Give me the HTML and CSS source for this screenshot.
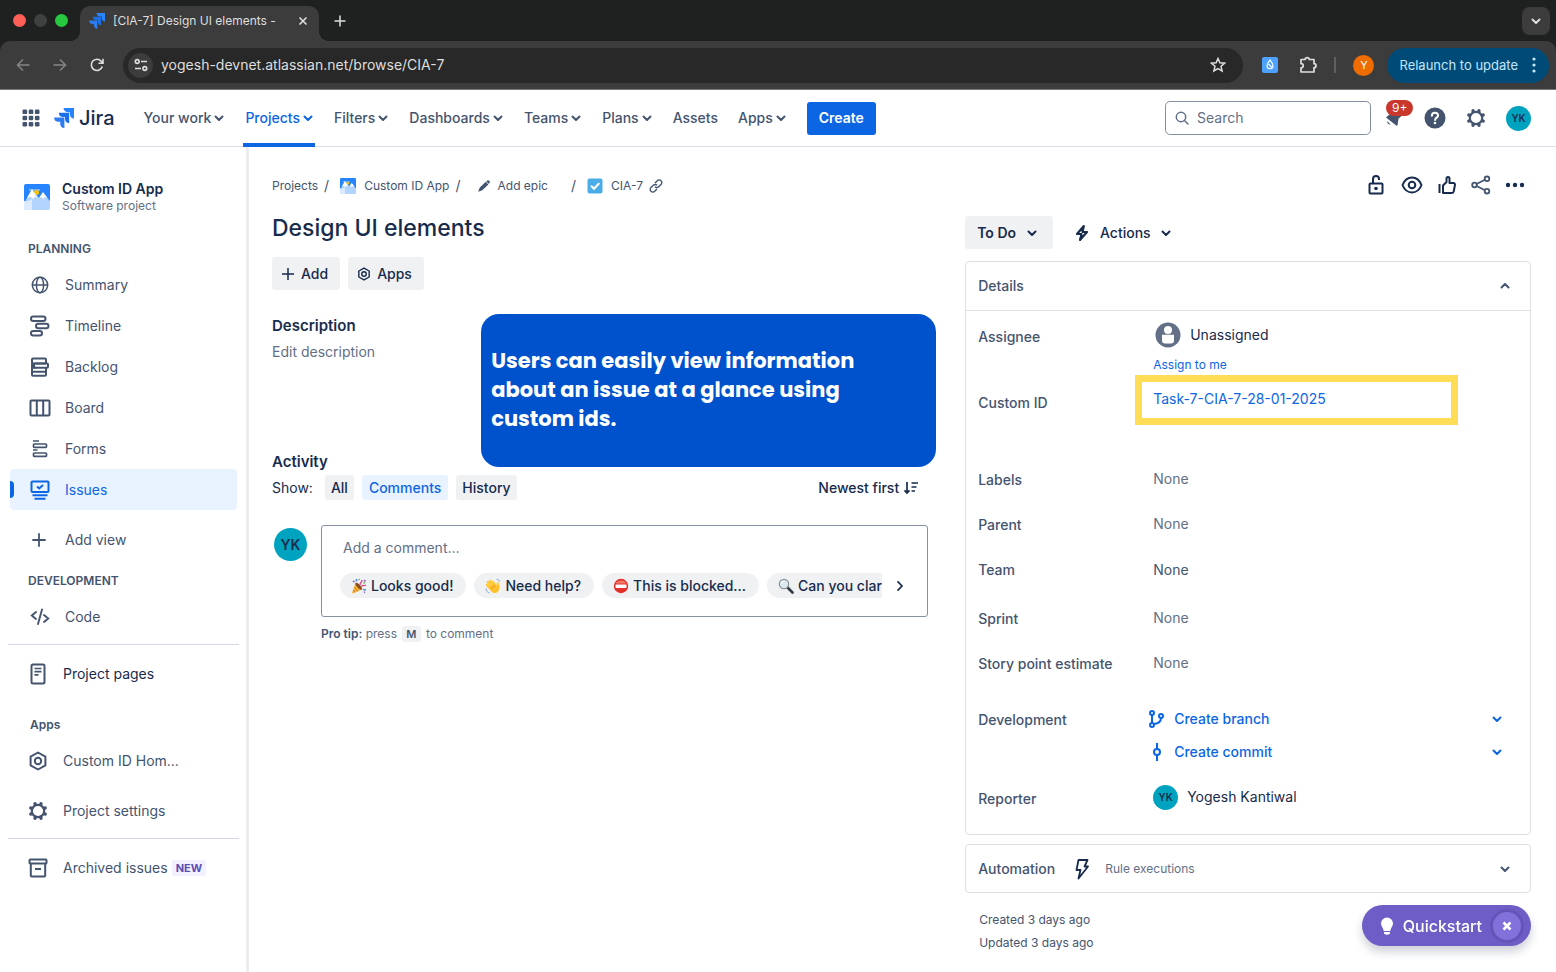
FILE: index.html
```html
<!DOCTYPE html>
<html lang="en">
<head>
<meta charset="utf-8">
<meta name="viewport" content="width=device-width, initial-scale=1">
<title>[CIA-7] Design UI elements - Jira</title>
<link rel="stylesheet" href="styles.css">
</head>
<body>
<svg class="sprite" aria-hidden="true">
  <symbol id="chevron" viewBox="0 0 12 12"><path d="M2.500 4.500 6 8l3.500-3.500" fill="none" stroke="currentColor" stroke-width="2" stroke-linecap="round" stroke-linejoin="round"/></symbol>
  <symbol id="jira" viewBox="0 0 20 20"><path fill="#2684ff" d="M9.500 0H20v10.500a4.600 4.600 0 0 1-4.100-4.600V4.300h-1.700A4.500 4.500 0 0 1 9.500 0z"/><path fill="#1d6fe8" d="M4.700 4.800h10.500v10.400a4.500 4.500 0 0 1-4.200-4.600V9H9.300a4.500 4.500 0 0 1-4.600-4.200z"/><path fill="#2e7df0" d="M0 9.500h10.400V20a4.600 4.600 0 0 1-4.200-4.600v-1.700H4.500A4.500 4.500 0 0 1 0 9.500z"/></symbol>
  <symbol id="gear" viewBox="0 0 20 20"><circle cx="10" cy="10" r="6.200" fill="none" stroke="currentColor" stroke-width="2.200"/><g stroke="currentColor" stroke-width="3.400" stroke-linecap="round"><path d="M7.100 3 7 2.800M12.900 3l.1-.2M17 7.100l.2-.1M17 12.900l.2.1M12.900 17l.1.2M7.100 17l-.1.2M3 12.900l-.2.1M3 7.100 2.800 7"/></g></symbol>
  <symbol id="hex" viewBox="0 0 20 20"><g fill="none" stroke="currentColor" stroke-width="2"><path stroke-linejoin="round" d="m10 1.500 7.400 4.200v8.600L10 18.500l-7.400-4.200V5.700z"/><circle cx="10" cy="10" r="3.200"/></g></symbol>
  <symbol id="picture" viewBox="0 0 26 26"><path fill="#2684ff" d="M2 0h22a2 2 0 0 1 2 2v15H0V2a2 2 0 0 1 2-2z"/><path fill="#79b0f5" d="M5 5h11v2H5z"/><circle cx="12.500" cy="8.500" r="2.500" fill="#ffc400"/><path fill="#b3d4ff" d="M0 19 8 6l7 8 4-5 7 8v7a2 2 0 0 1-2 2H2a2 2 0 0 1-2-2z"/><path fill="#deebff" d="m0 19 8-4v11H2a2 2 0 0 1-2-2z"/><path fill="#fff" d="m3 14 5-9 5.500 9-2.500-1.500L9 15l-2.500-2.500zM15 14l4-6 4.500 6-2.500-1-2 2-1.500-2z"/></symbol>
</svg>

<header class="browser">
  <div class="tabstrip">
    <div class="lights"><span class="light light-red"></span><span class="light"></span><span class="light light-green"></span></div>
    <div class="tab">
      <svg class="s16" aria-hidden="true"><use href="#jira"/></svg>
      <span class="tab-title">[CIA-7] Design UI elements -</span>
      <button class="bare" aria-label="Close tab"><svg class="s12" viewBox="0 0 12 12"><path d="m2.500 2.500 7 7m0-7-7 7" stroke="currentColor" stroke-width="1.600"/></svg></button>
    </div>
    <button class="bare new-tab" aria-label="New tab"><svg class="s12" viewBox="0 0 12 12"><path d="M6 .5v11M.5 6h11" stroke="currentColor" stroke-width="1.500"/></svg></button>
    <button class="bare tab-search" aria-label="Search tabs"><svg class="s12" aria-hidden="true"><use href="#chevron"/></svg></button>
  </div>
  <div class="toolbar">
    <button class="bare dim" aria-label="Back"><svg class="s14" viewBox="0 0 14 14"><path d="M13.500 7H1.500M7 1.500 1.500 7 7 12.500" fill="none" stroke="currentColor" stroke-width="1.500"/></svg></button>
    <button class="bare dim" aria-label="Forward"><svg class="s14" viewBox="0 0 14 14"><path d="M.5 7h12M7 1.500 12.500 7 7 12.500" fill="none" stroke="currentColor" stroke-width="1.500"/></svg></button>
    <button class="bare" aria-label="Reload"><svg class="s14" viewBox="0 0 14 14"><path d="M12.300 8.500A5.600 5.600 0 1 1 11.200 3.200l1.300 1.500M13 .8v4.500H8.500" fill="none" stroke="currentColor" stroke-width="1.600"/></svg></button>
    <div class="omnibox">
      <span class="site-info"><svg class="s14" viewBox="0 0 14 14"><g fill="none" stroke="currentColor" stroke-width="1.600"><circle cx="3.200" cy="3.500" r="1.900"/><path d="M7 3.500h6M1 10.500h6"/><circle cx="10.800" cy="10.500" r="1.900"/></g></svg></span>
      <input class="url" aria-label="Address" value="yogesh-devnet.atlassian.net/browse/CIA-7">
      <button class="bare" aria-label="Bookmark"><svg class="s16" viewBox="0 0 16 16"><path d="m8 1.500 1.900 4.300 4.700.4L11 9.300l1.100 4.600L8 11.500l-4.100 2.400L5 9.300 1.400 6.200l4.700-.4z" fill="none" stroke="currentColor" stroke-width="1.500"/></svg></button>
    </div>
    <span class="extension"><svg class="s12" viewBox="0 0 12 12"><path d="M6 1c2 2.500 3 3.700 3 5.800a3 3 0 0 1-6 0C3 4.700 4 3.500 6 1zM4.500 5l3.500 3.500" fill="none" stroke="#fff" stroke-width="1.100"/></svg></span>
    <button class="bare puzzle" aria-label="Extensions"><svg class="s18" viewBox="0 0 18 18"><path d="M2 3.500h4.200a2 1.900 0 0 1 4 0H15v4.200a2 2 0 0 1 0 4v4.300H2v-4.100c3-.3 3-4 0-4.200z" fill="none" stroke="currentColor" stroke-width="1.700" stroke-linejoin="round"/></svg></button>
    <span class="bar-sep"></span>
    <span class="profile">Y</span>
    <button class="relaunch">Relaunch to update <svg class="dots" viewBox="0 0 4 16"><g fill="currentColor"><circle cx="2" cy="2" r="1.600"/><circle cx="2" cy="8" r="1.600"/><circle cx="2" cy="14" r="1.600"/></g></svg></button>
  </div>
</header>

<nav class="topnav" aria-label="Primary">
  <button class="bare waffle" aria-label="Switch to"><svg class="s18" viewBox="0 0 18 18"><g fill="currentColor"><rect x=".5" y=".5" width="4.600" height="4.600" rx="1.200"/><rect x="6.700" y=".5" width="4.600" height="4.600" rx="1.200"/><rect x="12.900" y=".5" width="4.600" height="4.600" rx="1.200"/><rect x=".5" y="6.700" width="4.600" height="4.600" rx="1.200"/><rect x="6.700" y="6.700" width="4.600" height="4.600" rx="1.200"/><rect x="12.900" y="6.700" width="4.600" height="4.600" rx="1.200"/><rect x=".5" y="12.900" width="4.600" height="4.600" rx="1.200"/><rect x="6.700" y="12.900" width="4.600" height="4.600" rx="1.200"/><rect x="12.900" y="12.900" width="4.600" height="4.600" rx="1.200"/></g></svg></button>
  <a class="brand" href="#"><svg class="s20" aria-hidden="true"><use href="#jira"/></svg>Jira</a>
  <div class="menus">
    <a class="menu" href="#">Your work<svg class="s12"><use href="#chevron"/></svg></a>
    <a class="menu menu-current" href="#">Projects<svg class="s12"><use href="#chevron"/></svg></a>
    <a class="menu" href="#">Filters<svg class="s12"><use href="#chevron"/></svg></a>
    <a class="menu" href="#">Dashboards<svg class="s12"><use href="#chevron"/></svg></a>
    <a class="menu" href="#">Teams<svg class="s12"><use href="#chevron"/></svg></a>
    <a class="menu" href="#">Plans<svg class="s12"><use href="#chevron"/></svg></a>
    <a class="menu" href="#">Assets</a>
    <a class="menu" href="#">Apps<svg class="s12"><use href="#chevron"/></svg></a>
  </div>
  <button class="create">Create</button>
  <label class="search"><svg class="s14" viewBox="0 0 14 14"><g fill="none" stroke="currentColor" stroke-width="1.500" stroke-linecap="round"><circle cx="6" cy="6" r="4.700"/><path d="m9.500 9.500 3.500 3.500"/></g></svg><input aria-label="Search" placeholder="Search"></label>
  <div class="nav-icons">
    <button class="bare bell" aria-label="Notifications"><svg class="s20" viewBox="0 0 20 20"><path fill="currentColor" d="M2 9.500 7 5l11 2.500-3.500 3.200-1 6.300c-.2.800-.8.900-1.300.4z"/><path d="M3.200 13c-.2 2.300 1 3.600 3.400 3.500z" fill="currentColor"/></svg><span class="badge">9+</span></button>
    <button class="bare" aria-label="Help"><svg class="s22" viewBox="0 0 22 22"><circle cx="11" cy="11" r="10.500" fill="currentColor"/><path d="M7.900 8.700c0-4 6.200-4 6.200-.2 0 2-3 2.200-3 4.400" fill="none" stroke="#fff" stroke-width="2" stroke-linecap="round"/><circle cx="11" cy="16" r="1.300" fill="#fff"/></svg></button>
    <button class="bare" aria-label="Settings"><svg class="s20"><use href="#gear"/></svg></button>
    <span class="avatar avatar-sm">YK</span>
  </div>
</nav>

<div class="shell">
  <aside class="sidebar">
    <div class="project">
      <svg class="s26" aria-hidden="true"><use href="#picture"/></svg>
      <div><div class="project-name">Custom ID App</div><div class="project-type">Software project</div></div>
    </div>
    <h2 class="side-head">PLANNING</h2>
    <a class="side-link" href="#"><svg class="s20" viewBox="0 0 20 20"><g fill="none" stroke="currentColor" stroke-width="1.500"><circle cx="10" cy="10" r="7.700"/><ellipse cx="10" cy="10" rx="3.600" ry="7.700"/><path d="M2.300 10h15.400"/></g></svg>Summary</a>
    <a class="side-link" href="#"><svg class="s22" viewBox="0 0 22 22"><g fill="none" stroke="currentColor" stroke-width="2"><rect x="2" y="1.500" width="14.500" height="4.600" rx="2.300"/><rect x="7" y="8.700" width="12.500" height="4.600" rx="2.300"/><rect x="2" y="15.900" width="11" height="4.600" rx="2.300"/></g></svg>Timeline</a>
    <a class="side-link" href="#"><svg class="s22" viewBox="0 0 22 22"><g fill="none" stroke="currentColor" stroke-width="2" stroke-linejoin="round"><rect x="3" y="2.500" width="14" height="5" rx="1"/><rect x="5" y="7.500" width="14" height="4.300" rx="1"/><path d="M3 7.500v11.300a1 1 0 0 0 1 1h12a1 1 0 0 0 1-1v-7M3 15.800h14M3 11.800h4"/></g></svg>Backlog</a>
    <a class="side-link" href="#"><svg class="s22" viewBox="0 0 22 22"><path d="M2.500 3.500h17a1 1 0 0 1 1 1v13a1 1 0 0 1-1 1h-17a1 1 0 0 1-1-1v-13a1 1 0 0 1 1-1zM7.800 3.500v15M14.200 3.500v15" fill="none" stroke="currentColor" stroke-width="2"/></svg>Board</a>
    <a class="side-link" href="#"><svg class="s20" viewBox="0 0 20 20"><g fill="none" stroke="currentColor" stroke-width="1.700"><path d="M3 2h6M3 11h4.500"/><rect x="3.500" y="5" width="13" height="3.300" rx=".8"/><rect x="3.500" y="14" width="13" height="3.300" rx=".8"/></g></svg>Forms</a>
    <a class="side-link side-current" href="#" aria-current="page"><svg class="s22" viewBox="0 0 22 22"><g fill="none" stroke="currentColor" stroke-width="2"><rect x="2.500" y="2.500" width="17" height="10.500" rx="1"/><path d="m8 7.500 2.200 2L14 6M3.500 16.300h15M5.500 19.800h11"/></g></svg>Issues</a>
    <a class="side-link side-apart" href="#"><svg class="s22" viewBox="0 0 22 22"><path d="M10 5v12M4 11h12" stroke="currentColor" stroke-width="1.800" stroke-linecap="round"/></svg>Add view</a>
    <h2 class="side-head side-head-dev">DEVELOPMENT</h2>
    <a class="side-link" href="#"><svg class="s20" viewBox="0 0 20 20"><path d="M6 5 1.800 8.500 6 12M14 8l4.200 3.500L14 15M12 2.500 8 17" fill="none" stroke="currentColor" stroke-width="1.900" stroke-linecap="round"/></svg>Code</a>
    <hr>
    <a class="side-link side-strong" href="#"><svg class="s22" viewBox="0 0 22 22"><g fill="none" stroke="#44546f" stroke-width="2"><rect x="4.500" y="1.500" width="13" height="19" rx="1.500"/><path stroke-width="1.700" d="M7.500 5.500h7M7.500 8.700h7M7.500 11.800h4"/></g></svg>Project pages</a>
    <h2 class="side-head side-head-apps">Apps</h2>
    <a class="side-link" href="#"><svg class="s20"><use href="#hex"/></svg>Custom ID Hom...</a>
    <a class="side-link side-apart" href="#"><svg class="s20"><use href="#gear"/></svg>Project settings</a>
    <hr>
    <a class="side-link" href="#"><svg class="s20" viewBox="0 0 20 20"><g fill="none" stroke="currentColor" stroke-width="2"><rect x="1.500" y="1.500" width="17" height="4" rx=".8"/><path d="M2.800 5.500v12a1 1 0 0 0 1 1h12.400a1 1 0 0 0 1-1v-12M7 11h6"/></g></svg>Archived issues<span class="lozenge">NEW</span></a>
  </aside>

  <main class="issue">
    <div class="issue-top">
      <nav class="crumbs" aria-label="Breadcrumb">
        <a href="#">Projects</a><span class="slash">/</span>
        <a href="#" class="crumb-project"><svg class="s16"><use href="#picture"/></svg>Custom ID App</a><span class="slash">/</span>
        <a href="#" class="crumb-epic"><svg class="s12" viewBox="0 0 12 12"><path fill="currentColor" d="M8.300 1.400 9.200.6a1.300 1.300 0 0 1 1.800 0l.5.600a1.300 1.300 0 0 1 0 1.800l-.8.8zM7.800 1.800l2.600 2.600-6.100 5.900-3.300 1.300c-.5.2-.8-.1-.6-.6L1.800 7.500z"/></svg>Add epic</a><span class="slash">/</span>
        <a href="#" class="crumb-key"><svg class="s16" viewBox="0 0 16 16"><rect x=".5" y=".5" width="15" height="15" rx="2" fill="#4bade8"/><path d="m4.500 8.200 2.500 2.500 4.700-5" fill="none" stroke="#fff" stroke-width="2" stroke-linecap="round"/></svg>CIA-7</a>
        <svg class="s14" viewBox="0 0 14 14"><path d="m6 4 2.300-2.300a2.500 2.500 0 0 1 3.700 0 2.500 2.500 0 0 1 0 3.700L9.700 7.700a2.500 2.500 0 0 1-3.700 0M8 10l-2.300 2.300a2.500 2.500 0 0 1-3.700 0 2.500 2.500 0 0 1 0-3.700l2.300-2.300a2.500 2.500 0 0 1 3.700 0" fill="none" stroke="currentColor" stroke-width="1.400"/></svg>
      </nav>
      <div class="tools">
        <button class="bare" aria-label="Restrictions"><svg class="s22" viewBox="0 0 22 22"><g fill="none" stroke="currentColor" stroke-width="2"><rect x="4.500" y="9.500" width="13" height="10" rx="1"/><path d="M8 9.500V5a3 3 0 0 1 6 0v1"/></g><circle cx="11" cy="14.500" r="1.800" fill="currentColor"/></svg></button>
        <button class="bare" aria-label="Watch"><svg class="s22" viewBox="0 0 22 22"><g fill="none" stroke="currentColor" stroke-width="2"><path d="M1.500 11c4-10 15-10 19 0-4 10-15 10-19 0z"/><circle cx="11" cy="11" r="3.300"/></g></svg></button>
        <button class="bare" aria-label="Like"><svg class="s20" viewBox="0 0 20 20"><path d="M2.500 9v9M6 18V10.500L9.500 7V3.500c0-2 3-2 3 0V8h4a1.500 1.500 0 0 1 1.500 1.800l-1.300 6.700A2 2 0 0 1 14.700 18z" fill="none" stroke="currentColor" stroke-width="2" stroke-linejoin="round"/></svg></button>
        <button class="bare share" aria-label="Share"><svg class="s20" viewBox="0 0 20 20"><g fill="none" stroke="currentColor" stroke-width="1.800"><circle cx="3.500" cy="10" r="2.300"/><circle cx="16" cy="3.800" r="2.300"/><circle cx="16" cy="16.200" r="2.300"/><path d="m5.600 9 8.300-4.200M5.600 11l8.300 4.200"/></g></svg></button>
        <button class="bare" aria-label="More"><svg class="s20" viewBox="0 0 20 20"><g fill="currentColor"><circle cx="3" cy="10" r="2.200"/><circle cx="10" cy="10" r="2.200"/><circle cx="17" cy="10" r="2.200"/></g></svg></button>
      </div>
    </div>

    <div class="columns">
      <section class="content">
        <h1>Design UI elements</h1>
        <div class="buttons">
          <button class="btn"><svg class="s14" viewBox="0 0 14 14"><path d="M7 1v12M1 7h12" stroke="currentColor" stroke-width="1.500"/></svg>Add</button>
          <button class="btn"><svg class="s14"><use href="#hex"/></svg>Apps</button>
        </div>
        <h2 class="section-title">Description</h2>
        <p class="edit">Edit description</p>
        <h2 class="section-title section-activity">Activity</h2>
        <div class="filter">
          <span>Show:</span>
          <button class="pill">All</button><button class="pill pill-on">Comments</button><button class="pill">History</button>
          <button class="bare sort">Newest first<svg class="s16" viewBox="0 0 16 16"><path d="M4 2v11M1.500 10.300 4 13l2.500-2.700M8.500 3H15M8.500 7h5M8.500 11H12" fill="none" stroke="currentColor" stroke-width="1.700"/></svg></button>
        </div>
        <div class="comment">
          <span class="avatar avatar-lg">YK</span>
          <div class="comment-col">
            <div class="comment-box">
              <input class="comment-input" aria-label="Add a comment" placeholder="Add a comment…">
              <div class="chip-row">
                <div class="chips">
                  <button class="chip"><svg class="s16" viewBox="0 0 16 16"><path fill="#f5b73d" d="M4.500 5 1 14.700c-.2.600.2.900.7.700L11 11.500z"/><path d="m3.300 9 3.700 4.500M2.300 12l1.700 2.300" stroke="#d9832b" stroke-width="1.100"/><ellipse cx="7.700" cy="8.300" rx="1.600" ry="4.500" transform="rotate(-43 7.700 8.300)" fill="#8c4a1c"/><path d="M9 7c0-3 2-2 2-5M10 8.500c2-2 3 0 5-1.500" fill="none" stroke="#d8508d" stroke-width="1.400"/><path d="M5.500 1v2.500M12 11.500l3 .5" stroke="#4a8fe0" stroke-width="1.600"/><path d="m13 2 1.500 1.500M2 3l1.500 1M13 14.500l1-.5" stroke="#8d63c7" stroke-width="1.600"/><path d="m8 1 .5 1M12.500 5l1.500-.5" stroke="#6aa84f" stroke-width="1.400"/></svg>Looks good!</button>
                  <button class="chip"><svg class="s16" viewBox="0 0 16 16"><path fill="none" stroke="#ffcb3d" stroke-width="2.300" stroke-linecap="round" d="m4.500 10-2.700-3.200M6 8.500 2.800 4M8 7.200 5 3M10 7 7.700 3.700M12 9.500l.8-4"/><path fill="#ffc02e" d="M3.500 9.500 9.700 5.500l2.500 3.500 1.200-2.500 1 .5c.4 3-.2 6-2.600 7.500-3.300 1.800-6-.8-8.300-5z"/><path d="M5.300 9.300 7 11M7 8l1.700 2M8.800 7l1.700 2" stroke="#d98e1f" stroke-width=".7"/><path d="M1 10.500c.3 2.500 1.500 4 3.500 4.500M11.500 1.200c1.700.2 2.700 1 3.300 2.500" fill="none" stroke="#7ba7d8" stroke-width="1"/></svg>Need help?</button>
                  <button class="chip"><svg class="s16" viewBox="0 0 16 16"><circle cx="8" cy="8" r="7.200" fill="#e2302a"/><path d="M2.500 5.500a6.200 5.500 0 0 1 11 0z" fill="#f47a68"/><rect x="2.500" y="6.500" width="11" height="3.500" rx=".7" fill="#fff"/></svg>This is blocked...</button>
                  <button class="chip chip-last"><svg class="s16" viewBox="0 0 16 16"><path d="m9.500 9.500 5 5" stroke="#303a46" stroke-width="2.600" stroke-linecap="round"/><circle cx="6" cy="6" r="4.700" fill="#dce8ee" stroke="#8d9499" stroke-width="1.200"/><path d="M3.500 5.500a3 3 0 0 1 2.500-2" fill="none" stroke="#fff" stroke-width="1.200"/></svg>Can you clar</button>
                </div>
                <button class="bare chip-next" aria-label="More suggestions"><svg class="s12" viewBox="0 0 12 12"><path d="m4 1.800 4 4.200-4 4.200" fill="none" stroke="currentColor" stroke-width="1.700" stroke-linecap="round"/></svg></button>
              </div>
            </div>
            <p class="tip"><b>Pro tip:</b> press <kbd>M</kbd> to comment</p>
          </div>
        </div>
        <div class="callout">Users can easily view information about an issue at a glance using custom ids.</div>
      </section>

      <section class="side">
        <div class="status">
          <button class="btn btn-status">To Do<svg class="s12"><use href="#chevron"/></svg></button>
          <button class="btn btn-plain"><svg class="s18" viewBox="0 0 18 18"><path d="M10.800 2 4 10h4.500L7 16l7-8H9.500z" fill="none" stroke="currentColor" stroke-width="2.200" stroke-linejoin="round"/></svg>Actions<svg class="s12"><use href="#chevron"/></svg></button>
        </div>
        <div class="panel">
          <button class="panel-head">Details<svg class="s12 flip"><use href="#chevron"/></svg></button>
          <dl class="fields">
            <div class="field field-assignee"><dt>Assignee</dt><dd><span class="person"><svg class="s26" viewBox="0 0 26 26"><circle cx="13" cy="13" r="12.500" fill="#626f86"/><circle cx="13" cy="8" r="4" fill="#fff"/><path d="M7 12.800h12v5.700a3 3 0 0 1-3 3h-6a3 3 0 0 1-3-3z" fill="#fff"/></svg>Unassigned</span><a class="assign" href="#">Assign to me</a></dd></div>
            <div class="field field-custom"><dt>Custom ID</dt><dd class="highlight"><a href="#">Task-7-CIA-7-28-01-2025</a></dd></div>
            <div class="field"><dt>Labels</dt><dd class="none">None</dd></div>
            <div class="field"><dt>Parent</dt><dd class="none">None</dd></div>
            <div class="field field-team"><dt>Team</dt><dd class="none none-dark">None</dd></div>
            <div class="field"><dt>Sprint</dt><dd class="none">None</dd></div>
            <div class="field field-points"><dt>Story point estimate</dt><dd class="none">None</dd></div>
            <div class="field field-dev"><dt>Development</dt><dd class="dev">
              <button class="dev-link"><svg class="s18" viewBox="0 0 18 18"><g fill="none" stroke="currentColor" stroke-width="2"><circle cx="4" cy="3" r="2"/><circle cx="4" cy="15" r="2"/><circle cx="13" cy="6" r="2"/><path d="M4 5v8M13 8c0 4-3 5.500-7 6"/></g></svg>Create branch<svg class="s12 dev-more"><use href="#chevron"/></svg></button>
              <button class="dev-link"><svg class="s18" viewBox="0 0 18 18"><g fill="none" stroke="currentColor" stroke-width="2"><circle cx="9" cy="9" r="3"/><path d="M9 0v6M9 12v6"/></g></svg>Create commit<svg class="s12 dev-more"><use href="#chevron"/></svg></button>
            </dd></div>
            <div class="field"><dt>Reporter</dt><dd><span class="person"><span class="avatar avatar-sm">YK</span>Yogesh Kantiwal</span></dd></div>
          </dl>
        </div>
        <button class="panel panel-head automation">Automation<svg class="s22" viewBox="0 0 22 22"><path d="M7.500 2h9L13.500 8.500H17L7.500 20.500l2-8.500H5.500z" fill="none" stroke="#172b4d" stroke-width="1.800" stroke-linejoin="round"/></svg><small>Rule executions</small><svg class="s12 push"><use href="#chevron"/></svg></button>
        <p class="stamp">Created 3 days ago</p>
        <p class="stamp">Updated 3 days ago</p>
      </section>
    </div>
  </main>
</div>

<div class="quickstart">
  <button class="bare quick-open"><svg class="s18" viewBox="0 0 18 18"><path fill="currentColor" d="M9 .5a6 6 0 0 1 6 6c0 3-2.500 4.300-2.700 7.500H5.700C5.500 10.800 3 9.500 3 6.500a6 6 0 0 1 6-6zM6 15h6v1c0 1-1 1.700-3 1.700S6 17 6 16z"/></svg>Quickstart</button>
  <button class="bare quick-close" aria-label="Close Quickstart"><svg class="s12" viewBox="0 0 12 12"><path d="m2.500 2.500 7 7m0-7-7 7" stroke="currentColor" stroke-width="2.600"/></svg></button>
</div>
</body>
</html>
```
FILE: styles.css
```css
* { box-sizing: border-box; }
body {
  margin: 0;
  min-height: 100vh;
  display: flex;
  flex-direction: column;
  background: #fff;
  color: #172b4d;
  font: 14px/20px Inter, "Liberation Sans", sans-serif;
}
h1, h2, p, dl, dd { margin: 0; }
a { color: inherit; text-decoration: none; }
button, input { font: inherit; color: inherit; }
button { cursor: pointer; }
svg { flex: none; display: block; }
.sprite { position: absolute; width: 0; height: 0; }
.s12 { width: 12px; height: 12px; }
.s14 { width: 14px; height: 14px; }
.s16 { width: 16px; height: 16px; }
.s18 { width: 18px; height: 18px; }
.s20 { width: 20px; height: 20px; }
.s22 { width: 22px; height: 22px; }
.s26 { width: 26px; height: 26px; }
.bare { display: flex; align-items: center; padding: 0; border: 0; background: none; }

/* browser chrome */
.browser { background: #1f2120; color: #dedede; }
.tabstrip { display: flex; align-items: flex-end; height: 41px; padding: 0 6px 0 13px; }
.lights { display: flex; gap: 8px; align-self: center; }
.light { width: 13px; height: 13px; border-radius: 50%; background: #3f4140; }
.light-red { background: #ff5f57; }
.light-green { background: #28c840; }
.tab {
  position: relative; display: flex; align-items: center; gap: 8px;
  width: 239px; height: 35px; margin-left: 12px; padding: 0 10px 6px 9px;
  border-radius: 10px 10px 0 0; background: #3c3c3c;
}
.tab::before, .tab::after {
  content: ""; position: absolute; bottom: 0; width: 10px; height: 10px;
}
.tab::before { right: 100%; background: radial-gradient(circle at 0 0, #1f2120 10px, #3c3c3c 10px); }
.tab::after { left: 100%; background: radial-gradient(circle at 100% 0, #1f2120 10px, #3c3c3c 10px); }
.tab-title { flex: 1; white-space: nowrap; font-size: 12px; }
.new-tab { align-self: center; margin-left: 15px; }
.tab-search {
  align-self: center; justify-content: center; width: 28px; height: 28px;
  margin-left: auto; border-radius: 8px; background: #3c3c3c;
}
.toolbar {
  display: flex; align-items: center; gap: 23px; height: 49px; padding: 0 7px 0 16px;
  border-bottom: 1px solid #777; border-radius: 10px 10px 0 0; background: #3c3c3c;
}
.dim { color: #858585; }
.omnibox {
  flex: 1; display: flex; align-items: center; gap: 8px; height: 35px;
  margin-left: -4px; padding: 0 17px 0 5px; border-radius: 18px; background: #282828;
}
.site-info {
  display: grid; place-items: center; width: 25px; height: 25px;
  border-radius: 50%; background: #3c3c3c;
}
.url { flex: 1; min-width: 0; padding: 0; border: 0; background: none; outline: 0; }
.extension { display: grid; place-items: center; width: 16px; height: 16px; margin-left: -4px; background: #4da2ff; border-radius: 2px; }
.puzzle { margin-left: -2px; }
.bar-sep { width: 2px; height: 16px; margin: 0 -6px; background: #5f5f5f; }
.profile {
  display: grid; place-items: center; width: 21px; height: 21px;
  border-radius: 50%; background: #ef6c00; color: #fff; font-size: 11px;
}
.relaunch {
  display: flex; align-items: center; gap: 14px; height: 35px; margin-left: -10px; padding: 0 13px 0 12px;
  border: 0; border-radius: 18px; background: #004a77; color: #c2e7ff; font-size: 13px;
}
.dots { width: 4px; height: 16px; }

/* top navigation */
.topnav {
  display: flex; align-items: center; height: 57px; padding: 0 25px 0 22px;
  border-bottom: 1px solid #dcdfe8; color: #44546f;
}
.brand { display: flex; align-items: center; gap: 5px; margin: 0 29px 0 14px; color: #172b4d; font-size: 20px; font-weight: 500; }
.menus { display: flex; align-self: stretch; gap: 20px; }
.menu { position: relative; display: flex; align-items: center; gap: 2px; font-weight: 500; white-space: nowrap; }
.menu-current { color: #0c66e4; }
.menu-current::after { content: ""; position: absolute; inset: auto -1px -1px -2px; height: 4px; background: #0c66e4; }
.create {
  height: 33px; margin-left: 20px; padding: 0 12px; border: 0; border-radius: 3px;
  background: #0c66e4; color: #fff; font-weight: 600;
}
.search {
  display: flex; align-items: center; gap: 8px; width: 206px; height: 34px; margin-left: auto; padding: 0 9px;
  border: 1px solid #8590a2; border-radius: 5px; color: #626f86;
}
.search input { flex: 1; min-width: 0; padding: 0; border: 0; background: none; outline: 0; }
.search input::placeholder { color: #626f86; opacity: 1; }
.nav-icons { display: flex; align-items: center; gap: 20px; margin-left: 13px; }
.bell { position: relative; }
.badge {
  position: absolute; left: 2px; top: -8px; padding: 0 6px; border-radius: 8px;
  background: #c9372c; color: #fff; font-size: 12px; line-height: 16px;
}
.avatar {
  flex: none; display: grid; place-items: center; border-radius: 50%;
  background: #00a3bf; color: #172b4d; font-weight: 600;
}
.avatar-sm { width: 25px; height: 25px; font-size: 10px; }
.avatar-lg { width: 33px; height: 33px; font-size: 14px; }

/* sidebar */
.shell { flex: 1; display: flex; }
.sidebar { flex: none; width: 249px; padding: 33px 10px 20px; border-right: 3px solid #ebecf0; color: #44546f; }
.project { display: flex; align-items: center; gap: 12px; margin-bottom: 20px; padding-left: 14px; line-height: 17px; }
.project-name { color: #172b4d; font-weight: 600; }
.project-type { color: #626f86; font-size: 12px; }
.side-head { padding-left: 18px; font-size: 12px; font-weight: 600; line-height: 30px; }
.side-head-dev { margin-top: 6px; }
.side-head-apps { margin-top: 16px; padding-left: 20px; }
.side-link {
  position: relative; display: flex; align-items: center; gap: 14px;
  height: 41px; padding-left: 19px; border-radius: 4px; white-space: nowrap;
}
.side-link .s20 { margin: 0 1px; }
.side-current { width: 227px; background: #e9f2ff; color: #0c66e4; }
.side-current::before { content: ""; position: absolute; left: 0; top: 12px; width: 4px; height: 17px; border-radius: 0 4px 4px 0; background: #0c66e4; }
.side-apart { margin-top: 9px; }
.side-strong { color: #172b4d; }
.sidebar hr ~ .side-link { padding-left: 17px; }
.sidebar hr { height: 1px; margin: 7px -3px 8px -2px; border: 0; background: #d5d8e2; }
.lozenge { margin-left: -10px; padding: 0 4px; border-radius: 3px; background: #f3f0ff; color: #5e4db2; font-size: 11px; font-weight: 700; line-height: 16px; }

/* issue */
.issue { flex: 1; min-width: 0; padding: 26px 25px 20px 23px; }
.issue-top { display: flex; align-items: center; justify-content: space-between; height: 24px; }
.crumbs { display: flex; align-items: center; gap: 6px; padding-top: 2px; color: #44546f; font-size: 12px; }
.crumbs a { display: flex; align-items: center; gap: 8px; }
.slash { font-size: 14px; }
.crumb-project { margin-left: 5px; }
.crumb-epic { margin: 0 17px 0 11px; }
.crumb-key { margin-left: 5px; }
.tools { display: flex; align-items: center; gap: 14px; padding-right: 6px; }
.share { color: #44546f; }
.columns { display: grid; grid-template-columns: minmax(0, 54fr) minmax(0, 46fr); gap: 29px; }
.content { position: relative; padding: 17px 8px 0 0; }
h1 { font-size: 23px; font-weight: 500; line-height: 28px; }
.buttons { display: flex; gap: 8px; margin: 15px 0 26px; }
.btn {
  display: flex; align-items: center; gap: 6px; height: 33px; padding: 0 12px 0 9px;
  border: 0; border-radius: 3px; background: #f0f1f2; font-weight: 500;
}
.section-title { font-size: 15px; font-weight: 600; line-height: 20px; }
.edit { margin-top: 6px; color: #626f86; line-height: 20px; }
.section-activity { margin-top: 90px; }
.filter { display: flex; align-items: center; gap: 8px; margin-top: 3px; }
.filter > span { margin-right: 4px; }
.pill { height: 25px; padding: 0 6px; border: 0; border-radius: 3px; background: #f0f1f2; font-weight: 500; }
.pill-on { padding: 0 7px; background: #e9f2ff; color: #0c66e4; }
.sort { gap: 4px; margin: 0 9px 0 auto; font-weight: 500; }
.comment { display: flex; gap: 14px; margin-top: 25px; padding-left: 2px; }
.comment .avatar { margin-top: 3px; }
.comment-col { flex: 1; min-width: 0; }
.comment-box { padding: 12px 21px 18px 18px; border: 1px solid #8590a2; border-radius: 3px; }
.comment-input { display: block; width: 100%; height: 20px; padding: 0 3px; border: 0; outline: 0; background: none; }
.comment-input::placeholder { color: #626f86; opacity: 1; }
.chip-row { display: flex; align-items: center; gap: 12px; margin-top: 15px; }
.chips { flex: 1; min-width: 0; display: flex; gap: 8px; }
.chip {
  flex: none; display: flex; align-items: center; gap: 4px; height: 25px; padding: 0 13px 0 11px;
  border: 0; border-radius: 13px; background: #f0f1f2; font-weight: 500; white-space: nowrap;
}
.chip-last { flex: 1; padding-right: 0; border-radius: 13px 0 0 13px; }
.tip { margin-top: 7px; color: #626f86; font-size: 12px; }
.tip b { color: #44546f; font-weight: 600; }
kbd { margin: 0 2px; padding: 1px 4px; border-radius: 3px; background: #f0f1f2; color: #44546f; font: 600 11px/14px Inter, sans-serif; }
.callout {
  position: absolute; top: 117px; right: 0; width: 455px; height: 153px; padding: 32px 40px 0 10px;
  border-radius: 18px; background: #0052cc; color: #fff;
  font: 700 21px/29px Poppins, Inter, sans-serif;
}

/* details column */
.side { padding-top: 19px; }
.status { display: flex; gap: 8px; margin-bottom: 12px; }
.btn-status { gap: 10px; padding: 0 15px 0 12px; font-weight: 600; }
.btn-plain { gap: 9px; padding: 0 12px; background: none; }
.panel { border: 1px solid #dcdfe4; border-radius: 4px; }
.panel-head {
  display: flex; align-items: center; justify-content: space-between; width: 100%; height: 49px; padding: 0 19px 0 12px;
  border: 0; border-bottom: 1px solid #dcdfe4; background: none; color: #44546f; font-weight: 500;
}
.flip { transform: rotate(180deg); }
.fields { padding: 16px 12px 0; }
.field { display: grid; grid-template-columns: 175px minmax(0, 1fr); align-items: start; min-height: 45px; }
.field dt { color: #44546f; font-weight: 500; }
.field-assignee { height: 66px; }
.field-custom { height: 77px; }
.field-team { height: 49px; }
.field-points { height: 56px; }
.field-dev { height: 79px; }
.person { display: flex; align-items: center; gap: 9px; height: 20px; margin-top: -2px; }
.field-assignee .person { margin-left: 2px; }
.assign { display: block; margin-top: 10px; color: #0c66e4; font-size: 12px; }
.highlight { width: 323px; max-width: 100%; margin: -18px 0 0 -18px; padding: 7px 11px 9px; border: 7px solid #ffdd57; color: #0c66e4; line-height: 20px; }
.none { margin-top: -1px; color: #626f86; }
.none-dark { margin-top: 0; color: #44546f; }
.dev { display: grid; gap: 13px; margin: -1px 0 0 -5px; }
.dev-link { display: flex; align-items: center; gap: 8px; padding: 0 15px 0 0; border: 0; background: none; color: #0c66e4; font-weight: 500; }
.dev-more, .push { margin-left: auto; }
.automation { justify-content: flex-start; gap: 16px; margin: 9px 0 15px; border: 1px solid #dcdfe4; border-radius: 4px; }
.automation small { margin-left: -4px; color: #626f86; font-size: 12px; font-weight: 400; }
.stamp { padding-left: 14px; color: #44546f; font-size: 12px; line-height: 23px; }

.quickstart {
  position: fixed; right: 25px; bottom: 26px; display: flex; align-items: center; gap: 11px;
  height: 41px; padding: 0 10px 0 16px; border-radius: 21px; background: #6e5dc6; color: #fff;
  box-shadow: 0 6px 10px rgba(9, 30, 66, .2);
}
.quick-open { gap: 7px; font-size: 16px; font-weight: 500; }
.quick-close { justify-content: center; width: 28px; height: 28px; border-radius: 50%; background: #8270db; box-shadow: 0 0 0 3px #6554b8; }
```
